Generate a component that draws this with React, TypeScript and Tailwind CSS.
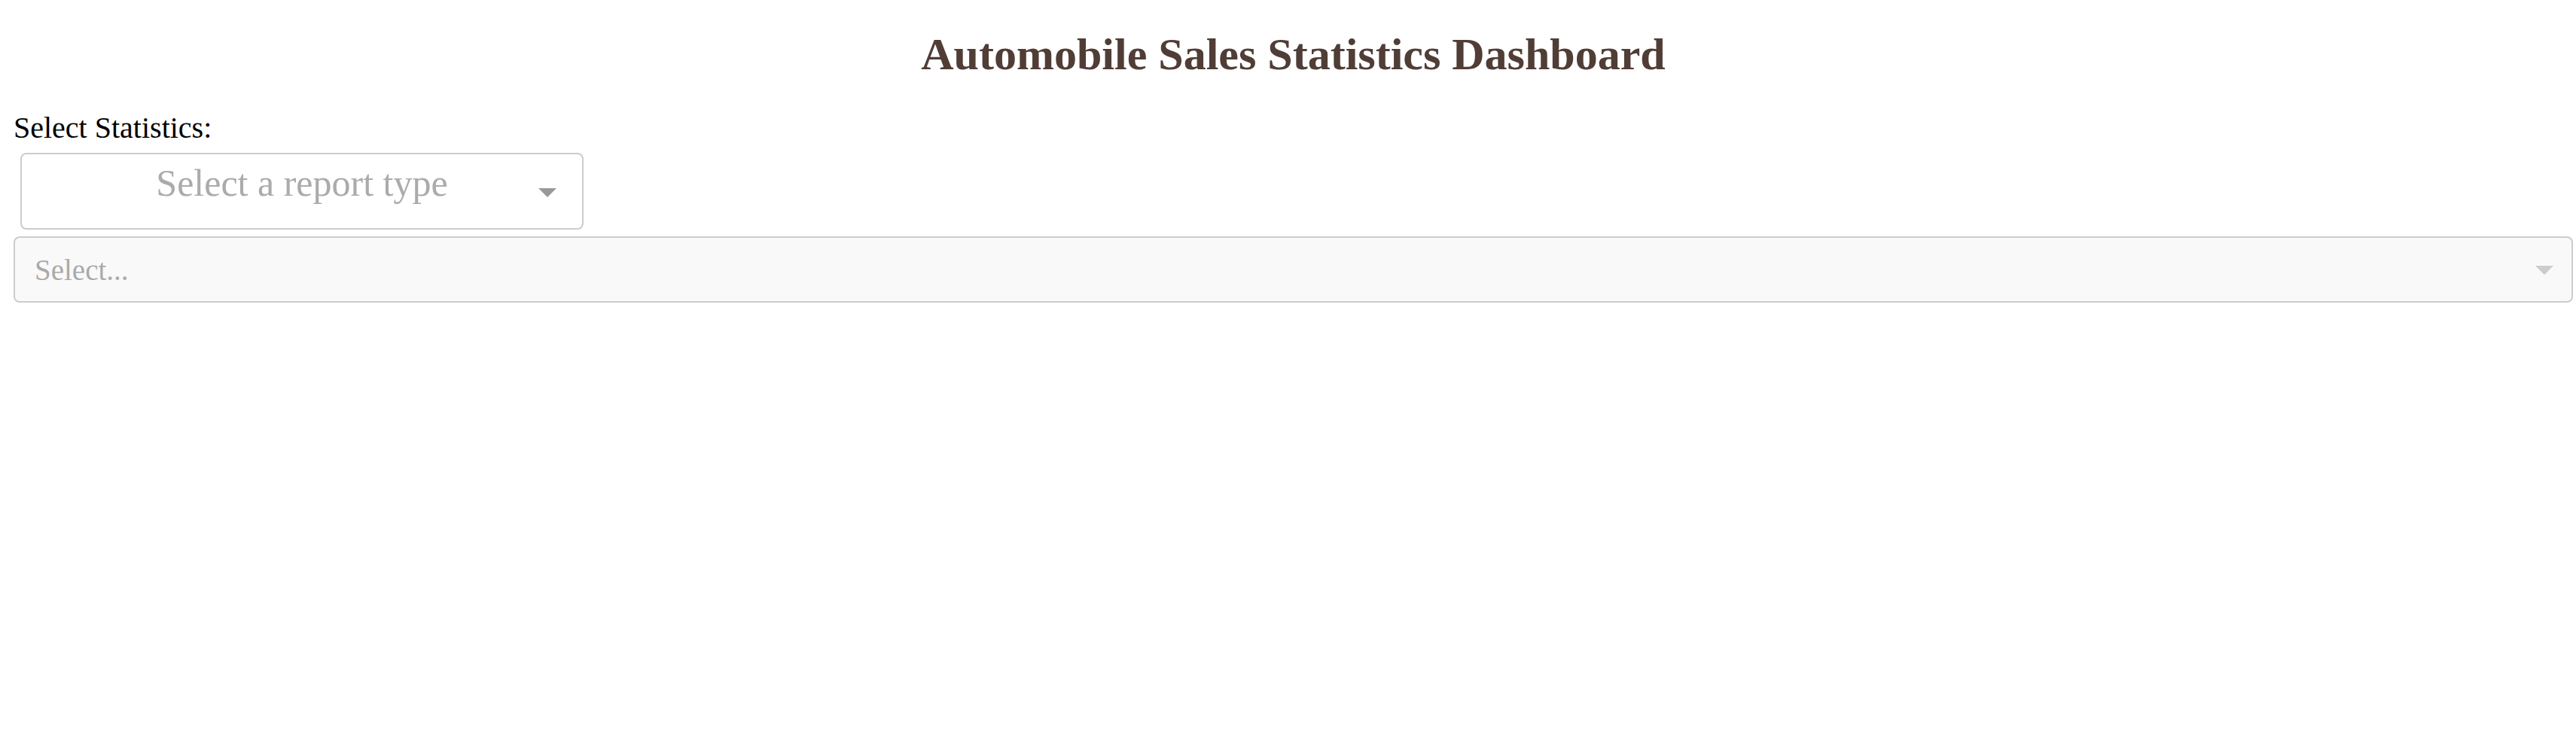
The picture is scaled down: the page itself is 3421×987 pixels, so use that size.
const Caret = ({ color }: { color: string }) => (
  <svg width="24" height="12" viewBox="0 0 24 12" className="block">
    <polygon points="0,0 24,0 12,12" fill={color} />
  </svg>
);

const App = () => {
  return (
    <div
      className="min-h-screen bg-white pl-[18px] pr-[4px] flex flex-col"
      style={{ fontFamily: '"Liberation Serif", "Times New Roman", serif' }}
    >
      <h1 className="mt-[42px] text-center text-[60px] leading-[60px] font-bold text-[#503D36]">
        Automobile Sales Statistics Dashboard
      </h1>

      <label className="mt-[48px] text-[40px] leading-[40px] text-black">
        Select Statistics:
      </label>

      <div className="ml-[9px] mt-[13px] w-[748px] h-[102px] border-2 border-[#cccccc] rounded-[8px] bg-white flex">
        <div className="w-[58px]" />
        <div className="flex-1 pt-[13px] text-center text-[50px] leading-[50px] text-[#ababab]">
          Select a report type
        </div>
        <div className="w-[58px] flex items-center justify-start pt-[4px]">
          <Caret color="#999999" />
        </div>
      </div>

      <div className="mt-[9px] h-[88px] border-2 border-[#cccccc] rounded-[8px] bg-[#f9f9f9] flex items-center">
        <div className="flex-1 pl-[26px] text-[39px] leading-[39px] text-[#aaaaaa]">
          Select...
        </div>
        <div className="pr-[24px] pt-[2px]">
          <Caret color="#cccccc" />
        </div>
      </div>
    </div>
  );
};

export default App;
